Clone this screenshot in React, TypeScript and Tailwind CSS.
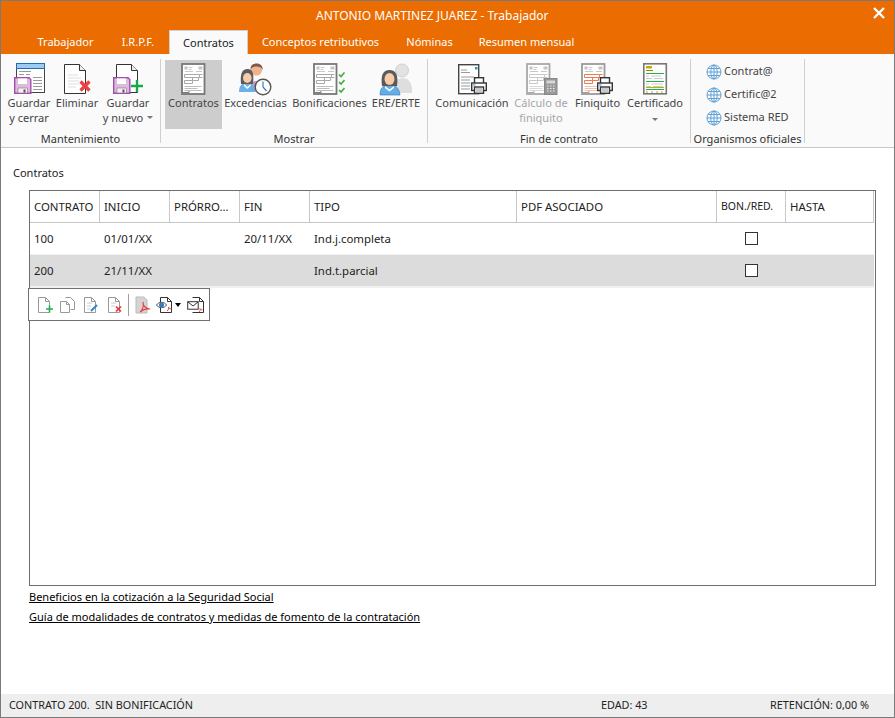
const tabs = [
  { label: 'Trabajador', w: 'w-[83px]' },
  { label: 'I.R.P.F.', w: 'w-[62px]' },
  { label: 'Contratos', w: 'w-[79px]', active: true },
  { label: 'Conceptos retributivos', w: 'w-[145px]' },
  { label: 'Nóminas', w: 'w-[73px]' },
  { label: 'Resumen mensual', w: 'w-[121px]' },
]

const columns = ['CONTRATO', 'INICIO', 'PRÓRRO...', 'FIN', 'TIPO', 'PDF ASOCIADO', 'BON./RED.', 'HASTA']

const rows = [
  { contrato: '100', inicio: '01/01/XX', fin: '20/11/XX', tipo: 'Ind.j.completa', selected: false },
  { contrato: '200', inicio: '21/11/XX', fin: '', tipo: 'Ind.t.parcial', selected: true },
]

function Floppy({ x, y }: { x: number; y: number }) {
  return (
    <g transform={`translate(${x} ${y})`}>
      <path d="M.7.7h14.300l1.800 1.800v13.800H.7z" fill="#dcbcdc" stroke="#a44fae" strokeWidth="1.400" />
      <rect x="4" y="1.400" width="9" height="5.600" fill="#fff" />
      <rect x="4" y="11" width="9.500" height="5" fill="#f6eff6" stroke="#8a6a8e" strokeWidth=".6" />
      <rect x="9.500" y="12.500" width="2" height="3" fill="#555" />
    </g>
  )
}

function Printer({ x, y }: { x: number; y: number }) {
  return (
    <g transform={`translate(${x} ${y})`} fill="#fff" stroke="#333" strokeWidth="1.400">
      <rect x="3.500" y=".7" width="9" height="6" />
      <rect x=".7" y="6" width="14.600" height="7.500" />
      <rect x="3.500" y="10" width="9" height="6.300" />
      <path d="M5 12h6M5 14h6" strokeWidth=".8" stroke="#777" />
      <rect x="2" y="7.500" width="2.500" height="1" fill="#1e9be0" stroke="none" />
    </g>
  )
}

function FormDoc({ x, tone = 'gray' }: { x: number; tone?: 'gray' | 'light' | 'orange' }) {
  const border = tone === 'light' ? '#a8a8a8' : tone === 'orange' ? '#9a9a9a' : '#777'
  const line = tone === 'orange' ? '#ef7a50' : tone === 'light' ? '#c8c8c8' : '#a8a8a8'
  const soft = tone === 'orange' ? '#f6c0ac' : tone === 'light' ? '#d8d8d8' : '#bdbdbd'
  return (
    <g transform={`translate(${x} 1)`}>
      <rect x="1" y="1" width="22.500" height="30" fill="#fff" stroke={border} strokeWidth="1.800" />
      <path d="M3.500 3.500h3v3h-3zM17.500 3.500h4v3h-4z" fill="#c4c4c4" />
      <path d="M7.500 4.500h4M7.500 6.500h3M4 8.500h8M15 8.500h6" stroke="#c8c8c8" />
      <g fill="none" stroke={line}>
        <path d="M3.500 11.500h15v3h-15zM3.500 17.500h8v3h-8zM11.500 14.500h6v3h-6zM18.500 11.500h3M18.500 14.500h3" />
      </g>
      <path d="M3.500 23.500h17M3.500 25.500h13M3.500 27.500h17" stroke={soft} />
      <path d="M2 29.500h6v-1.500" fill="none" stroke={border} />
    </g>
  )
}

function GuardarCerrarIcon() {
  return (
    <svg width="36" height="34" viewBox="0 0 36 34">
      <rect x="5.500" y="1.500" width="28" height="29" fill="#fff" stroke="#444" />
      <rect x="5.500" y="1.500" width="28" height="5" fill="#9ccaf0" stroke="#1f6fb5" />
      <path d="M8 9.500h12M8 12.500h5M15 12.500h4M22 15.500h9M22 18.500h9M22 21.500h9M22 24.500h9M22 27.500h9" stroke="#999" />
      <Floppy x={3} y={15} />
    </svg>
  )
}

function EliminarIcon() {
  return (
    <svg width="36" height="34" viewBox="0 0 36 34">
      <path d="M5.500 2.500h15l6 6v23h-21z" fill="#fff" stroke="#333" />
      <path d="M20.500 2.500v6h6" fill="#eee" stroke="#333" />
      <path d="M9 13h10M9 16h13M9 19h11M9 22h11M9 25h8" stroke="#ddd" />
      <path d="M21.500 19.500l9 9M30.500 19.500l-9 9" stroke="#ef3e42" strokeWidth="3.200" />
    </svg>
  )
}

function GuardarNuevoIcon() {
  return (
    <svg width="36" height="34" viewBox="0 0 36 34">
      <path d="M6.500 2.500h15l6 6v22h-21z" fill="#fff" stroke="#333" />
      <path d="M21.500 2.500v6h6" fill="#eee" stroke="#333" />
      <Floppy x={3} y={15} />
      <path d="M21 24h12M27 18v12" stroke="#18a84c" strokeWidth="2.400" />
    </svg>
  )
}

function ExcedenciasIcon() {
  return (
    <svg width="37" height="34" viewBox="0 0 37 34">
      <path d="M12 30c0-9 3-11 8-11s9 3 10 8v3z" fill="#c59ac9" />
      <circle cx="19.500" cy="8" r="5.600" fill="#efb48c" />
      <path d="M13.600 8c-.5-5 3-6.500 6-6.500s6.500 2 6 6.500c-1-3-3-3.500-6-3.500s-5 .5-6 3.500z" fill="#7b5a4e" />
      <path d="M2 30c0-6 2.500-9 8-9s8 3 8 9z" fill="#6db0e6" />
      <path d="M4 22c-1-10 1-15 6.500-15S17 12 16 22z" fill="#5c5c5c" />
      <ellipse cx="10.300" cy="16" rx="4.300" ry="5" fill="#f6cba8" />
      <path d="M7 22l3.300 3 3.300-3v2l-3.300 3L7 24z" fill="#fff" />
      <circle cx="26" cy="25" r="7.800" fill="#fff" stroke="#555" strokeWidth="1.400" />
      <path d="M26 19.500V25l3.500 4" fill="none" stroke="#3d7cc0" strokeWidth="1.200" />
    </svg>
  )
}

function BonificacionesIcon() {
  return (
    <svg width="37" height="34" viewBox="0 0 37 34">
      <FormDoc x={2} />
      <g fill="none" stroke="#3fae3f" strokeWidth="1.600">
        <path d="M28 12.500l2 2 3.500-4" />
        <path d="M28 20l2 2 3.500-4" />
        <path d="M28 28l2 2 3.500-4" />
      </g>
    </svg>
  )
}

function EreIcon() {
  return (
    <svg width="36" height="34" viewBox="0 0 36 34">
      <path d="M16 26c1-7 4-10 9-10s8 4 9 10v5H16z" fill="#dedede" />
      <circle cx="24" cy="8.500" r="6.500" fill="#e2e2e2" stroke="#d0d0d0" />
      <path d="M2 33c0-7 3-10 9.500-10S21 26 22 33z" fill="#63aee6" stroke="#2f78b5" strokeWidth=".6" />
      <path d="M4 24c-1.500-11 1-16 7.500-16S20.500 13 19 24z" fill="#5a5a5a" />
      <ellipse cx="11.500" cy="17" rx="5" ry="6" fill="#f6cba8" />
      <path d="M7 24l4.500 3.500L16 24v2l-4.500 3.500L7 26z" fill="#fff" />
    </svg>
  )
}

function ComunicacionIcon() {
  return (
    <svg width="36" height="34" viewBox="0 0 36 34">
      <rect x="4.700" y="2.700" width="20" height="29" fill="#fff" stroke="#444" strokeWidth="1.400" />
      <rect x="21" y="5" width="2.500" height="2.500" fill="#1e9be0" />
      <path d="M7 8h6M7 10.500h9M7 15h13M7 18h9M7 21h9M7 24h9M7 27h9" stroke="#999" />
      <Printer x={17} y={15} />
    </svg>
  )
}

function CalculoIcon() {
  return (
    <svg width="36" height="34" viewBox="0 0 36 34">
      <FormDoc x={3} tone="light" />
      <rect x="21.500" y="16.500" width="12.500" height="16" fill="#999" stroke="#888" />
      <rect x="23.500" y="18.500" width="8.500" height="3" fill="#d8d8d8" />
      <path d="M24 24h1.500M27 24h1.500M30 24h1.500M24 26.500h1.500M27 26.500h1.500M30 26.500h1.500M24 29h1.500M27 29h1.500M30 29h1.500" stroke="#eee" />
    </svg>
  )
}

function FiniquitoIcon() {
  return (
    <svg width="37" height="34" viewBox="0 0 37 34">
      <FormDoc x={2} tone="orange" />
      <Printer x={18} y={15} />
    </svg>
  )
}

function CertificadoIcon() {
  return (
    <svg width="36" height="34" viewBox="0 0 36 34">
      <rect x="6.800" y="1.800" width="22.500" height="30" fill="#fff" stroke="#777" strokeWidth="1.600" />
      <rect x="9" y="4" width="6" height="2.500" fill="#bcb000" />
      <path d="M9 8.500h7" stroke="#8a8a00" />
      <path d="M9 11.500h18M9 19.500h18M9 27.500h18" stroke="#22b04c" />
      <path d="M9 14h3M14 14h10M9 16.500h6M17 16.500h9M9 22h3M14 22h12M9 24.500h5M16 24.500h10" stroke="#c9c9c9" />
      <path d="M9 30h18" stroke="#bcb000" strokeDasharray="2 3" />
      <path d="M9 25.500h18" stroke="#bcb000" />
    </svg>
  )
}

function ContratosIcon() {
  return (
    <svg width="37" height="34" viewBox="0 0 37 34">
      <FormDoc x={6} />
    </svg>
  )
}

function Globe() {
  return (
    <svg width="16" height="16" viewBox="0 0 16 16" fill="none" stroke="#5ea2d8" strokeWidth="1">
      <circle cx="8" cy="8" r="7" />
      <ellipse cx="8" cy="8" rx="3.200" ry="7" />
      <path d="M1 8h14M2 4.500h12M2 11.500h12M8 1v14" />
    </svg>
  )
}

function RibbonButton({
  icon,
  lines,
  width,
  active,
  disabled,
  caret,
}: {
  icon: React.ReactNode
  lines: string[]
  width: string
  active?: boolean
  disabled?: boolean
  caret?: boolean
}) {
  return (
    <div className={`${width} h-[69px] shrink-0 flex flex-col items-center pt-[2px] ${active ? 'bg-[#cdcdcd]' : ''}`}>
      <div className="h-[33px] flex justify-center">{icon}</div>
      <div className={`text-center leading-[15px] whitespace-nowrap ${disabled ? 'text-[#a6a6a6]' : 'text-[#444]'}`}>
        {lines.map((l) => (
          <div key={l}>{l}</div>
        ))}
        {caret && (
          <div className="flex h-[15px] items-center justify-center">
            <span className="mt-[4px] h-0 w-0 border-x-[3px] border-t-[3px] border-x-transparent border-t-[#777]" />
          </div>
        )}
      </div>
    </div>
  )
}

function RibbonGroup({ label, width, pad, children }: { label: string; width: string; pad: string; children: React.ReactNode }) {
  return (
    <div className={`${width} h-[84px] shrink-0 border-r border-[#cfcfcf] flex flex-col`}>
      <div className={`flex h-[70px] pt-px ${pad}`}>{children}</div>
      <div className="mt-[3px] h-[14px] text-center leading-[14px] text-[#333] whitespace-nowrap">{label}</div>
    </div>
  )
}

function SmallDoc({ children }: { children?: React.ReactNode }) {
  return (
    <svg width="18" height="18" viewBox="0 0 18 18" fill="none">
      <path d="M2.500 1.500h7l4 4v11h-11z" fill="#fff" stroke="#999" />
      <path d="M9.500 1.500v4h4" stroke="#999" />
      {children}
    </svg>
  )
}

function Toolbar() {
  return (
    <div className="absolute left-[-2px] top-[97px] z-10 flex h-[33px] w-[182px] items-center border border-[#707070] bg-white pl-[7px]">
      <SmallDoc>
        <path d="M10 13h7M13.500 9.500v7" stroke="#22b04c" strokeWidth="1.600" />
      </SmallDoc>
      <div className="ml-[5px]">
        <svg width="18" height="18" viewBox="0 0 18 18" fill="none" stroke="#999">
          <path d="M6.500 1.500h5l4 4v8h-4" fill="#fff" />
          <path d="M1.500 5.500h6l3 3v8h-9z" fill="#fff" />
          <path d="M7.500 5.500v3h3" />
        </svg>
      </div>
      <div className="ml-[5px]">
        <SmallDoc>
          <path d="M5 7h5M5 10h4M5 13h3" stroke="#ccc" />
          <path d="M9 15l6-6" stroke="#2f86cf" strokeWidth="2" />
        </SmallDoc>
      </div>
      <div className="ml-[6px]">
        <SmallDoc>
          <path d="M5 7h5M5 10h4" stroke="#ccc" />
          <path d="M10 10.500l5 5M15 10.500l-5 5" stroke="#e8333a" strokeWidth="1.700" />
        </SmallDoc>
      </div>
      <div className="ml-[4px] mr-[5px] h-[22px] w-px bg-[#a0a0a0]" />
      <svg width="18" height="18" viewBox="0 0 18 18" fill="none">
        <path d="M2 1h8l3 3v13H2z" fill="#d4d4d4" stroke="#bbb" />
        <path d="M6 16c3-2 4-7 3-10 0 4 3 7 7 7-3-.5-7 .5-10 3z" stroke="#e8453c" strokeWidth="1.200" />
      </svg>
      <div className="ml-[4px]">
        <svg width="18" height="18" viewBox="0 0 18 18" fill="none">
          <path d="M4.500 1.500h7l4 4v11h-11z" fill="#fff" stroke="#333" />
          <path d="M11.500 1.500v4h4" stroke="#333" />
          <path d="M.5 9c2-3.500 8-3.500 10 0-2 3.500-8 3.500-10 0z" fill="#fff" stroke="#555" />
          <circle cx="5.500" cy="9" r="2.500" fill="#2f7fc4" />
          <path d="M11 15c1.500-1 2-2.500 1.500-4 .5 1.500 1.500 2 3 2" stroke="#e8453c" />
        </svg>
      </div>
      <span className="ml-[1px] h-0 w-0 border-x-[3px] border-t-[4px] border-x-transparent border-t-black" />
      <div className="ml-[6px]">
        <svg width="18" height="18" viewBox="0 0 18 18" fill="none">
          <path d="M5.500 1.500h7l4 4v11h-11" fill="#fff" stroke="#333" />
          <path d="M12.500 1.500v4h4" stroke="#333" />
          <rect x=".7" y="5.700" width="10.500" height="7.500" fill="#fff" stroke="#333" />
          <path d="M1 6l5 4 5-4" stroke="#333" />
          <path d="M12 16c1-1 1.500-2 1-3.500.5 1 1.500 1.500 2.500 1.500" stroke="#e8453c" />
        </svg>
      </div>
    </div>
  )
}

export default function App() {
  return (
    <div className="flex h-[718px] w-[895px] flex-col border border-[#7a7a7a] bg-white font-['Noto_Sans',sans-serif] text-[11px] text-[#222]">
      <div className="h-[53px] shrink-0 bg-[#eb6c00] text-white">
        <div className="flex h-[29px] items-center">
          <span className="ml-[315px] text-[12px]">ANTONIO MARTINEZ JUAREZ - Trabajador</span>
          <svg className="ml-auto mr-[9px] mt-[-5px]" width="12" height="12" viewBox="0 0 12 12">
            <path d="M1 1l10 10M11 1L1 11" stroke="#fff" strokeWidth="2.400" />
          </svg>
        </div>
        <div className="flex h-[24px] pl-[23px]">
          {tabs.map((t) => (
            <div
              key={t.label}
              className={`${t.w} flex items-center justify-center whitespace-nowrap pt-px ${
                t.active ? 'border-x border-t border-[#d0d0d0] bg-[#fafafa] text-[#222]' : ''
              }`}
            >
              {t.label}
            </div>
          ))}
        </div>
      </div>

      <div className="flex h-[94px] shrink-0 border-b border-[#c8c8c8] bg-[#fafafa] pt-[5px]">
        <RibbonGroup label="Mantenimiento" width="w-[160px]" pad="pl-[4px]">
          <RibbonButton icon={<GuardarCerrarIcon />} lines={['Guardar', 'y cerrar']} width="w-[48px]" />
          <RibbonButton icon={<EliminarIcon />} lines={['Eliminar']} width="w-[48px]" />
          <div className="w-[54px] h-[69px] shrink-0 flex flex-col items-center pt-[2px]">
            <div className="h-[33px]"><GuardarNuevoIcon /></div>
            <div className="text-center leading-[15px] text-[#444]">Guardar</div>
            <div className="flex items-center gap-[4px] leading-[15px] text-[#444] whitespace-nowrap">
              y nuevo
              <span className="h-0 w-0 border-x-[3px] border-t-[3px] border-x-transparent border-t-[#777]" />
            </div>
          </div>
        </RibbonGroup>
        <RibbonGroup label="Mostrar" width="w-[267px]" pad="pl-[4px]">
          <RibbonButton icon={<ContratosIcon />} lines={['Contratos']} width="w-[57px]" active />
          <RibbonButton icon={<ExcedenciasIcon />} lines={['Excedencias']} width="w-[67px]" />
          <RibbonButton icon={<BonificacionesIcon />} lines={['Bonificaciones']} width="w-[81px]" />
          <RibbonButton icon={<EreIcon />} lines={['ERE/ERTE']} width="w-[52px]" />
        </RibbonGroup>
        <RibbonGroup label="Fin de contrato" width="w-[263px]" pad="pl-[5px]">
          <RibbonButton icon={<ComunicacionIcon />} lines={['Comunicación']} width="w-[78px]" />
          <RibbonButton icon={<CalculoIcon />} lines={['Cálculo de', 'finiquito']} width="w-[60px]" disabled />
          <RibbonButton icon={<FiniquitoIcon />} lines={['Finiquito']} width="w-[53px]" />
          <RibbonButton icon={<CertificadoIcon />} lines={['Certificado']} width="w-[62px]" caret />
        </RibbonGroup>
        <RibbonGroup label="Organismos oficiales" width="w-[114px]" pad="pl-[15px]">
          <div className="flex flex-col">
            {['Contrat@', 'Certific@2', 'Sistema RED'].map((name) => (
              <div key={name} className="flex h-[23px] items-center gap-[2px] whitespace-nowrap text-[#444]">
                <Globe />
                {name}
              </div>
            ))}
          </div>
        </RibbonGroup>
      </div>

      <div className="flex min-h-0 flex-1 flex-col">
        <div className="ml-[12px] mt-[17px] h-[15px] leading-[15px]">Contratos</div>
        <div className="relative ml-[28px] mt-[10px] h-[396px] w-[847px] border border-[#6e6e6e]">
          <div className="grid grid-cols-[70px_70px_70px_70px_207px_200px_69px_88px] h-[32px]">
            {columns.map((c) => (
              <div
                key={c}
                className={`flex items-center whitespace-nowrap border-b border-r border-[#c8c8c8] pl-[4px] pt-px ${
                  c === 'BON./RED.' ? 'text-[10.5px]' : 'text-[11.4px]'
                }`}
              >
                {c}
              </div>
            ))}
          </div>
          {rows.map((r) => (
            <div
              key={r.contrato}
              className={`grid w-[844px] grid-cols-[70px_70px_70px_70px_207px_200px_69px_88px] border-[#f0f0f0] text-[11.4px] ${
                r.selected ? 'h-[33px] border-b-2 bg-[#dcdcdc]' : 'h-[32px] border-b bg-white'
              }`}
            >
              <div className="flex items-center pl-[4px] pt-px">{r.contrato}</div>
              <div className="flex items-center pl-[4px] pt-px">{r.inicio}</div>
              <div />
              <div className="flex items-center pl-[4px] pt-px">{r.fin}</div>
              <div className="flex items-center pl-[4px] pt-px">{r.tipo}</div>
              <div />
              <div className="flex items-center justify-center">
                <span className="h-[13px] w-[13px] border border-[#333] bg-white" />
              </div>
              <div />
            </div>
          ))}
          <Toolbar />
        </div>
        <a className="ml-[28px] mt-px h-[20px] leading-[20px] text-black underline">Beneficios en la cotización a la Seguridad Social</a>
        <a className="ml-[28px] h-[20px] leading-[20px] text-black underline">Guía de modalidades de contratos y medidas de fomento de la contratación</a>
        <div className="mt-auto flex h-[23px] items-center bg-[#eeeeee] pl-[8px] text-[10.8px]">
          <span className="w-[592px] whitespace-pre">CONTRATO 200.  SIN BONIFICACIÓN</span>
          <span className="w-[169px]">EDAD: 43</span>
          <span>RETENCIÓN: 0,00 %</span>
        </div>
      </div>
    </div>
  )
}
